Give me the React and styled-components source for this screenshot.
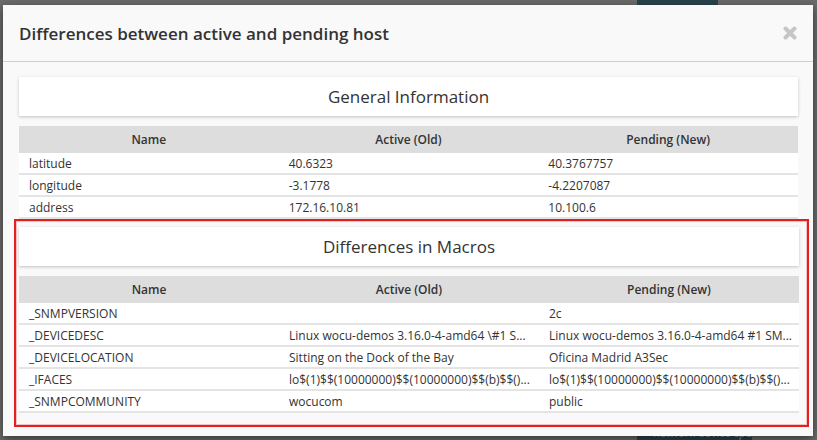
import React from 'react';
import styled, { createGlobalStyle } from 'styled-components';

const GlobalStyle = createGlobalStyle`
  body {
    margin: 0;
    font-family: "Open Sans", "Liberation Sans", sans-serif;
    color: #333;
  }
`;

const Backdrop = styled.div`
  position: relative;
  width: 817px;
  height: 440px;
  overflow: hidden;
  background: #6b6b6b;
  padding: 5px 0 0 3px;
  box-sizing: border-box;
`;

const BehindBlock = styled.div`
  position: absolute;
  left: 637px;
  background: #2a434b;
  color: #8aa0a6;
  font-size: 11px;
  line-height: 13px;
  padding-left: 16px;
  box-sizing: border-box;
  white-space: nowrap;
`;

const Modal = styled.div`
  position: relative;
  width: 810px;
  height: 431px;
  background: #f9f9f9;
  box-shadow: 0 3px 9px rgba(0, 0, 0, 0.5);
  display: flex;
  flex-direction: column;
`;

const ModalHeader = styled.div`
  height: 56px;
  border-bottom: 1px solid #cfcfcf;
  display: flex;
  align-items: center;
  justify-content: space-between;
  padding: 0 16px;
`;

const ModalTitle = styled.h4`
  margin: 0;
  font-size: 17px;
  font-weight: 600;
  color: #333;
`;

const CloseButton = styled.button`
  border: none;
  background: none;
  padding: 0;
  width: 14px;
  height: 14px;
  display: flex;
  cursor: pointer;
`;

const ModalBody = styled.div`
  padding: 15px 15px 9px 16px;
`;

const Panel = styled.div`
  height: 39px;
  background: #fff;
  box-shadow: 0 1px 3px rgba(0, 0, 0, 0.22);
  display: flex;
  align-items: center;
  justify-content: center;
  font-size: 17px;
  color: #333;
  margin-bottom: 10px;
`;

const Table = styled.table`
  width: 100%;
  border-collapse: collapse;
  table-layout: fixed;
  font-size: 12px;
`;

const HeadCell = styled.th`
  height: 27px;
  padding: 0 10px;
  background: #dddddd;
  font-weight: 600;
  text-align: center;
  color: #333;
`;

const Cell = styled.td`
  height: 20px;
  padding: 0 10px;
  background: #fff;
  border-bottom: 2px solid #e4e4e4;
  white-space: nowrap;
  overflow: hidden;
  color: #333;
`;

const Highlight = styled.div`
  margin: 0 -11px 0 -5px;
  border: 2px solid #e3201f;
  box-shadow: inset 0 0 0 1px rgba(240, 150, 150, 0.55);
  padding: 6px 8px 12px 3px;
`;

const general = [
  ['latitude', '40.6323', '40.3767757'],
  ['longitude', '-3.1778', '-4.2207087'],
  ['address', '172.16.10.81', '10.100.6'],
];

const macros = [
  ['_SNMPVERSION', '', '2c'],
  ['_DEVICEDESC', 'Linux wocu-demos 3.16.0-4-amd64 \\#1 S...', 'Linux wocu-demos 3.16.0-4-amd64 #1 SM...'],
  ['_DEVICELOCATION', 'Sitting on the Dock of the Bay', 'Oficina Madrid A3Sec'],
  ['_IFACES', 'lo$(1)$$(10000000)$$(10000000)$$(b)$$()...', 'lo$(1)$$(10000000)$$(10000000)$$(b)$$()...'],
  ['_SNMPCOMMUNITY', 'wocucom', 'public'],
];

function DiffTable({ rows }) {
  return (
    <Table>
      <thead>
        <tr>
          <HeadCell>Name</HeadCell>
          <HeadCell>Active (Old)</HeadCell>
          <HeadCell>Pending (New)</HeadCell>
        </tr>
      </thead>
      <tbody>
        {rows.map((r) => (
          <tr key={r[0]}>
            <Cell>{r[0]}</Cell>
            <Cell>{r[1]}</Cell>
            <Cell>{r[2]}</Cell>
          </tr>
        ))}
      </tbody>
    </Table>
  );
}

function App() {
  return (
    <Backdrop>
      <GlobalStyle />
      <BehindBlock style={{ top: 0, width: 81, height: 5 }} />
      <BehindBlock style={{ top: 426, width: 115, height: 14 }}>network device cpu</BehindBlock>
      <Modal>
        <ModalHeader>
          <ModalTitle>Differences between active and pending host</ModalTitle>
          <CloseButton aria-label="close">
            <svg width="14" height="14" viewBox="0 0 14 14">
              <path d="M2.5 2.5 L11.5 11.5 M11.5 2.5 L2.5 11.5" stroke="#c6c6c6" strokeWidth="4" strokeLinecap="round" />
            </svg>
          </CloseButton>
        </ModalHeader>
        <ModalBody>
          <Panel>General Information</Panel>
          <DiffTable rows={general} />
          <Highlight>
            <Panel>Differences in Macros</Panel>
            <DiffTable rows={macros} />
          </Highlight>
        </ModalBody>
      </Modal>
    </Backdrop>
  );
}

export default App;
